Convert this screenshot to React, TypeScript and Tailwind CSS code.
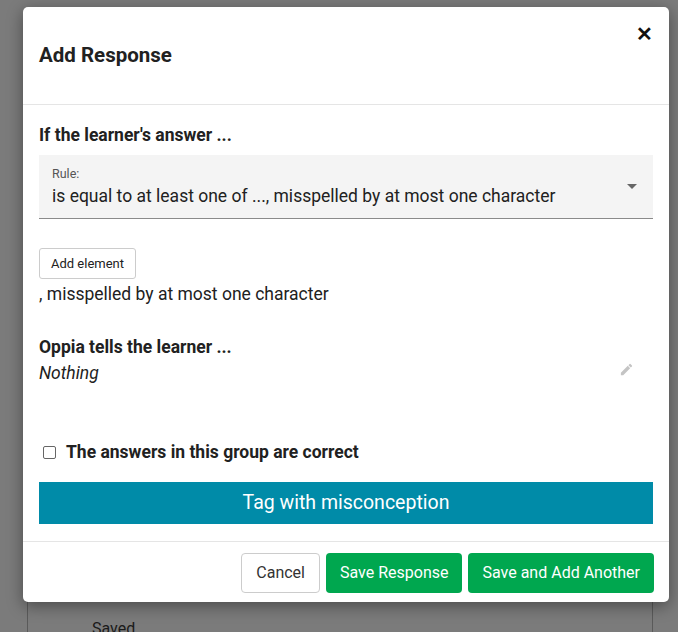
import React from "react";

export default function App() {
  return (
    <div className="relative h-[632px] w-[678px] overflow-hidden bg-[#7b7b7b]" style={{ fontFamily: "Roboto, 'Liberation Sans', sans-serif" }}>
      {/* page behind */}
      <div className="absolute left-[27px] top-[590px] h-[60px] w-[626px] border border-[#5a5a5a]">
        <div className="ml-[64px] mt-[26px] text-[16px] text-[#1a1a1a]">Saved</div>
      </div>

      <div className="absolute left-[23px] top-[7px] w-[646px] rounded-[5px] bg-white shadow-[0_4px_16px_rgba(0,0,0,0.4)]">
        <div className="relative flex h-[97px] items-center px-4">
          <h2 className="text-[20.5px] font-bold text-[#212121]">Add Response</h2>
          <span className="absolute right-[16px] top-[17px] text-[20px] font-bold leading-none text-[#111]">✕</span>
        </div>
        <div className="border-t border-[#e5e5e5] px-4 pt-[17px] text-[17.5px] leading-[26px] text-[#212121]">
          <div className="font-bold">If the learner's answer ...</div>
          <div className="mt-[7px] flex h-[64px] items-center justify-between border-b border-[#8a8a8a] bg-[#f4f4f4] pl-[13px] pr-[16px]">
            <div>
              <div className="text-[12.5px] leading-[18px] text-[#555]">Rule:</div>
              <div>is equal to at least one of ..., misspelled by at most one character</div>
            </div>
            <div className="h-0 w-0 border-x-[5px] border-t-[5px] border-x-transparent border-t-[#666]" />
          </div>
          <button className="mt-[29px] h-[31px] rounded-[3px] border border-[#ccc] px-[11px] text-[13px] leading-none text-[#222]">Add element</button>
          <div className="mt-[2px]">, misspelled by at most one character</div>

          <div className="mt-[27px] flex items-start justify-between">
            <div>
              <div className="font-bold">Oppia tells the learner ...</div>
              <div className="italic">Nothing</div>
            </div>
            <svg className="mr-[19px] mt-[28px]" width="15" height="15" viewBox="0 0 24 24" fill="#c4c4c4">
              <path d="M3 17.25V21h3.75L17.81 9.94l-3.75-3.75L3 17.25zM20.71 7.04a1 1 0 0 0 0-1.41l-2.34-2.34a1 1 0 0 0-1.41 0l-1.83 1.83 3.75 3.75 1.83-1.83z" />
            </svg>
          </div>

          <label className="mt-[53px] flex items-center gap-[10px] pl-[4px]">
            <span className="h-[13px] w-[13px] rounded-[2px] border border-[#666] bg-white" />
            <span className="font-bold">The answers in this group are correct</span>
          </label>

          <div className="mt-[17px] flex h-[42px] items-center justify-center bg-[#008ba8] text-[19.5px] text-white">Tag with misconception</div>
        </div>
        <div className="mt-[17px] flex justify-end gap-[6px] border-t border-[#e5e5e5] px-[15px] pb-[9px] pt-[11px]">
          <button className="h-[40px] rounded-[4px] border border-[#ccc] px-[14px] text-[16px] text-[#333]">Cancel</button>
          <button className="h-[40px] rounded-[4px] bg-[#00a74f] px-[14px] text-[16px] text-white">Save Response</button>
          <button className="h-[40px] rounded-[4px] bg-[#00a74f] px-[14px] text-[16px] text-white">Save and Add Another</button>
        </div>
      </div>
    </div>
  );
}
